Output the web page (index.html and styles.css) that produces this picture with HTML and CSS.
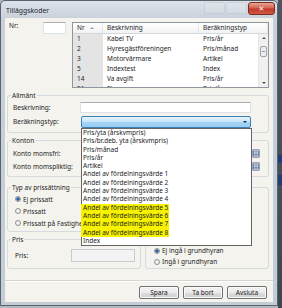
FILE: index.html
```html
<!DOCTYPE html>
<html lang="sv">
<head>
    <meta charset="UTF-8">
    <title>Tilläggskoder</title>
    <link rel="stylesheet" href="styles.css">
</head>
<body>
<div class="screen">
    <div class="window">
        <div class="titlebar">
            <span class="title">Tilläggskoder</span>
            <span class="ghost-btn first"></span>
            <span class="ghost-btn"></span>
            <span class="close-btn">&#x2715;</span>
        </div>

        <div class="client">
            <div class="top-row">
                <span class="lbl nr-lbl">Nr:</span>
                <div class="textbox nr-box"></div>
                <div class="grid">
                    <div class="grid-head">
                        <span class="c-nr">Nr <i class="sort"></i></span>
                        <span class="c-desc">Beskrivning</span>
                        <span class="c-type">Beräkningstyp</span>
                    </div>
                    <div class="grid-body">
                        <div class="rows">
                            <div class="row"><span class="c-nr">1</span><span class="c-desc">Kabel TV</span><span class="c-type">Pris/år</span></div>
                            <div class="row"><span class="c-nr">2</span><span class="c-desc">Hyresgästföreningen</span><span class="c-type">Pris/månad</span></div>
                            <div class="row"><span class="c-nr">3</span><span class="c-desc">Motorvärmare</span><span class="c-type">Artikel</span></div>
                            <div class="row"><span class="c-nr">5</span><span class="c-desc">Indextest</span><span class="c-type">Index</span></div>
                            <div class="row"><span class="c-nr">14</span><span class="c-desc">Va avgift</span><span class="c-type">Pris/år</span></div>
                            <div class="row"><span class="c-nr">21</span><span class="c-desc">El</span><span class="c-type">Pris/år</span></div>
                        </div>
                        <div class="vscroll">
                            <span class="arrow up"></span>
                            <span class="thumb"></span>
                            <span class="arrow down"></span>
                        </div>
                    </div>
                </div>
            </div>

            <div class="group allmant">
                <span class="legend">Allmänt</span>
                <div class="field">
                    <span class="lbl">Beskrivning:</span>
                    <div class="textbox wide"></div>
                </div>
                <div class="field">
                    <span class="lbl">Beräkningstyp:</span>
                    <div class="combo"><i class="combo-arrow"></i></div>
                </div>
            </div>

            <div class="group konton">
                <span class="legend">Konton</span>
                <div class="field">
                    <span class="lbl">Konto momsfri:</span>
                    <div class="textbox account"></div>
                    <span class="pick-btn"><svg viewBox="0 0 8 9" width="8" height="9"><rect x="1.5" y="2" width="5" height="5" fill="#f4f6fb" stroke="#5d6f9c" stroke-width="0.8"/><path d="M1.5 4h5M1.5 5.5h5M4 2v5" stroke="#5d6f9c" stroke-width="0.6"/></svg></span>
                </div>
                <div class="field">
                    <span class="lbl">Konto momspliktig:</span>
                    <div class="textbox account"></div>
                    <span class="pick-btn"><svg viewBox="0 0 8 9" width="8" height="9"><rect x="1.5" y="2" width="5" height="5" fill="#f4f6fb" stroke="#5d6f9c" stroke-width="0.8"/><path d="M1.5 4h5M1.5 5.5h5M4 2v5" stroke="#5d6f9c" stroke-width="0.6"/></svg></span>
                </div>
            </div>

            <div class="lower">
                <div class="left-col">
                    <div class="group typ">
                        <span class="legend">Typ av prissättning</span>
                        <div class="opt"><i class="radio on"></i>Ej prissatt</div>
                        <div class="opt"><i class="radio"></i>Prissatt</div>
                        <div class="opt"><i class="radio"></i>Prissatt på Fastighet</div>
                    </div>
                    <div class="group pris">
                        <span class="legend">Pris</span>
                        <div class="field">
                            <span class="lbl pris-lbl">Pris:</span>
                            <div class="textbox disabled"></div>
                        </div>
                    </div>
                </div>
                <div class="group grundhyra">
                    <div class="opt"><i class="radio on"></i>Ej ingå i grundhyran</div>
                    <div class="opt"><i class="radio"></i>Ingå i grundhyran</div>
                </div>
            </div>

            <div class="separator"></div>

            <div class="buttons">
                <span class="btn">Spara</span>
                <span class="btn">Ta bort</span>
                <span class="btn">Avsluta</span>
            </div>

            <!-- öppen lista för Beräkningstyp -->
            <div class="dropdown">
                <div class="item">Pris/yta (årskvmpris)</div>
                <div class="item">Pris/br.deb. yta (årskvmpris)</div>
                <div class="item">Pris/månad</div>
                <div class="item">Pris/år</div>
                <div class="item">Artikel</div>
                <div class="item">Andel av fördelningsvärde 1</div>
                <div class="item">Andel av fördelningsvärde 2</div>
                <div class="item">Andel av fördelningsvärde 3</div>
                <div class="item">Andel av fördelningsvärde 4</div>
                <div class="item"><mark>Andel av fördelningsvärde 5</mark></div>
                <div class="item"><mark>Andel av fördelningsvärde 6</mark></div>
                <div class="item"><mark>Andel av fördelningsvärde 7</mark></div>
                <div class="item"><mark>Andel av fördelningsvärde 8</mark></div>
                <div class="item">Index</div>
            </div>
        </div>
    </div>
    <div class="desktop">
        <span class="bar one"></span>
        <span class="bar two"></span>
    </div>
</div>
</body>
</html>
```

FILE: styles.css
```css
/* Tilläggskoder - dialog i Windows 7 basic-stil */
* {
    box-sizing: border-box;
}
body {
    margin: 0;
    width: 282px;
    height: 308px;
    overflow: hidden;
    background: #b3b8be;
    font-family: "Noto Sans", "DejaVu Sans", sans-serif;
    font-size: 6.5px;
    line-height: 9px;
    color: #1d1d1d;
}
.screen {
    display: flex;
    height: 308px;
}
.window {
    width: 278px;
    height: 306px;
    border: 1px solid #59636e;
    border-radius: 5px 5px 0 0;
    background: linear-gradient(#dde2e9, #c9d0da 18px, #c4ccd6);
    padding: 0 4px 3px 4px;
    display: flex;
    flex-direction: column;
}
.titlebar {
    height: 17px;
    display: flex;
    align-items: flex-start;
    padding-top: 1px;
}
.title {
    margin: 4px 0 0 1px;
    font-size: 6.8px;
    color: #1c2430;
}
.ghost-btn {
    width: 21px;
    height: 12px;
    margin-left: 1px;
    border: 1px solid rgba(150, 160, 175, 0.25);
    border-radius: 2px;
    background: rgba(255, 255, 255, 0.12);
}
.ghost-btn.first {
    margin-left: auto;
}
.close-btn {
    width: 27px;
    height: 13px;
    margin: 0 -2px 0 1px;
    border: 1px solid #7b2b22;
    border-radius: 3px;
    background: linear-gradient(#e9a494, #d5634f 45%, #c0392a 55%, #cf5a44);
    color: #fff;
    font-size: 7px;
    line-height: 11px;
    text-align: center;
    font-weight: bold;
}
.client {
    position: relative;
    flex: 1;
    background: #f4f3ee;
    display: flex;
    flex-direction: column;
}

/* ---- övre raden ---- */
.top-row {
    display: flex;
    height: 66px;
    margin: 4px 4px 0 4px;
}
.lbl {
    display: inline-block;
    white-space: nowrap;
}
.nr-lbl {
    width: 34px;
    margin-top: -1px;
}
.textbox {
    background: #fff;
    border: 1px solid #dde2e8;
    border-top-color: #abadb3;
}
.nr-box {
    width: 23px;
    height: 12px;
}
.grid {
    flex: 1;
    margin-left: 6px;
    border: 1px solid #8f969f;
    background: #fff;
    display: flex;
    flex-direction: column;
    overflow: hidden;
}
.grid-head {
    height: 11px;
    display: flex;
    background: linear-gradient(#ffffff, #f1f2f4);
    border-bottom: 1px solid #d5d7da;
    line-height: 10px;
}
.grid-head span {
    border-right: 1px solid #e4e5e7;
}
.c-nr {
    width: 30px;
    padding-left: 4px;
    flex-shrink: 0;
}
.c-desc {
    width: 96px;
    padding-left: 4px;
    flex-shrink: 0;
    white-space: nowrap;
    overflow: hidden;
}
.c-type {
    flex: 1;
    padding-left: 4px;
    white-space: nowrap;
}
.sort {
    display: inline-block;
    margin-left: 4px;
    vertical-align: 1px;
    border-left: 2px solid transparent;
    border-right: 2px solid transparent;
    border-bottom: 2px solid #9aa0a6;
}
.grid-body {
    flex: 1;
    display: flex;
    overflow: hidden;
}
.rows {
    flex: 1;
}
.row {
    display: flex;
    height: 10px;
    line-height: 10px;
}
.row .c-nr {
    background: #e4e4e4;
}
.vscroll {
    width: 10px;
    background: #f0f0f0;
    border-left: 1px solid #e6e6e6;
    display: flex;
    flex-direction: column;
    align-items: center;
    padding: 3px 0 3px;
}
.arrow {
    border-left: 2px solid transparent;
    border-right: 2px solid transparent;
}
.arrow.up {
    border-bottom: 2px solid #505050;
}
.arrow.down {
    border-top: 2px solid #505050;
    margin-top: auto;
}
.thumb {
    width: 7px;
    height: 11px;
    margin-top: 7px;
    border: 1px solid #9da3a9;
    border-radius: 2px;
    background: repeating-linear-gradient(#eceef0 0 4px, #8e949a 4px 5px, #eceef0 5px 6px), #eceef0;
    background-size: 3px 11px;
    background-position: center 0;
    background-repeat: no-repeat;
    background-color: #eceef0;
}

/* ---- grupper ---- */
.group {
    position: relative;
    border: 1px solid #d6dbe0;
    border-radius: 3px;
}
.legend {
    position: absolute;
    top: -5px;
    left: 3px;
    padding: 0 1px;
    background: #f4f3ee;
    line-height: 9px;
}
.field {
    display: flex;
    align-items: center;
}
.allmant {
    height: 38px;
    margin: 7px 4px 0 2px;
    padding: 6px 0 0 5px;
}
.allmant .field {
    height: 11px;
    margin-bottom: 3px;
}
.allmant .lbl {
    width: 67px;
}
.textbox.wide {
    width: 171px;
    height: 11px;
}
.combo {
    position: relative;
    width: 170px;
    height: 12px;
    margin: 1px 0 0 1px;
    border: 1px solid #3c7fb1;
    border-radius: 2px;
    background: linear-gradient(#e5f3fd, #c4e4f9 50%, #a7d5f5 51%, #98cdf3);
}
.combo-arrow {
    position: absolute;
    right: 3px;
    top: 4px;
    border-left: 2px solid transparent;
    border-right: 2px solid transparent;
    border-top: 2px solid #1b2a3a;
}
.konton {
    height: 37px;
    margin: 7px 4px 0 2px;
    padding: 7px 0 0 5px;
}
.konton .field {
    height: 10px;
    margin-bottom: 3px;
}
.konton .lbl {
    width: 68px;
}
.textbox.account {
    width: 169px;
    height: 10px;
}
.pick-btn {
    display: flex;
    margin-left: 2px;
    width: 8px;
    height: 9px;
    border: 1px solid #9aa6b8;
    border-radius: 1px;
    background: #dfe5ef;
}
.pick-btn svg {
    margin: -1px;
}
.lower {
    display: flex;
    gap: 4px;
    margin: 10px 4px 0 2px;
}
.left-col {
    width: 134px;
}
.typ {
    height: 45px;
    padding: 5px 0 0 7px;
}
.opt {
    display: flex;
    align-items: center;
    height: 12px;
    white-space: nowrap;
}
.radio {
    width: 6px;
    height: 6px;
    margin-right: 2px;
    border-radius: 50%;
    border: 1px solid #909396;
    background: radial-gradient(#ffffff, #dadcdf);
}
.radio.on {
    background: radial-gradient(circle, #2a5ca4 0 1.4px, #a8c4e6 1.8px, #eef2f7 2.4px);
}
.pris {
    height: 30px;
    margin-top: 7px;
    padding: 9px 0 0 7px;
}
.pris-lbl {
    width: 56px;
}
.textbox.disabled {
    width: 64px;
    height: 13px;
    background: #f3f3f3;
    border: 1px solid #c8cacd;
}
.grundhyra {
    flex: 1;
    height: 82px;
    padding: 0 0 1px 8px;
    display: flex;
    flex-direction: column;
    justify-content: flex-end;
}
.grundhyra .opt {
    height: 11px;
}
.separator {
    margin-top: 11px;
    border-top: 1px solid #d5d5d0;
    border-bottom: 1px solid #ffffff;
}
.buttons {
    display: flex;
    justify-content: flex-end;
    gap: 4px;
    margin-top: 4px;
    padding-right: 6px;
}
.btn {
    width: 40px;
    height: 13px;
    border: 1px solid #707070;
    border-radius: 2px;
    background: linear-gradient(#f3f3f3, #ebebeb 50%, #dddddd 51%, #cfcfcf);
    box-shadow: inset 0 0 0 1px #fbfbfb;
    text-align: center;
    line-height: 11px;
}

/* ---- öppen rullgardinslista ---- */
.dropdown {
    position: absolute;
    left: 76px;
    top: 110px;
    width: 171px;
    height: 118px;
    background: #fff;
    border: 1px solid #646464;
    padding: 0 0 0 1px;
}
.item {
    height: 8.3px;
    line-height: 8.3px;
    white-space: nowrap;
}
mark {
    display: inline-block;
    background: #f6f200;
    color: inherit;
    margin-left: -2px;
    padding: 0 1px 0 2px;
}

/* ---- skrivbordet bakom ---- */
.desktop {
    flex: 1;
    position: relative;
    background: linear-gradient(#4d5661, #3d4651);
}
.bar {
    position: absolute;
    left: 0;
    right: 0;
    background: #233d72;
}
.bar.one {
    top: 155px;
    height: 8px;
}
.bar.two {
    top: 175px;
    height: 10px;
}
```
